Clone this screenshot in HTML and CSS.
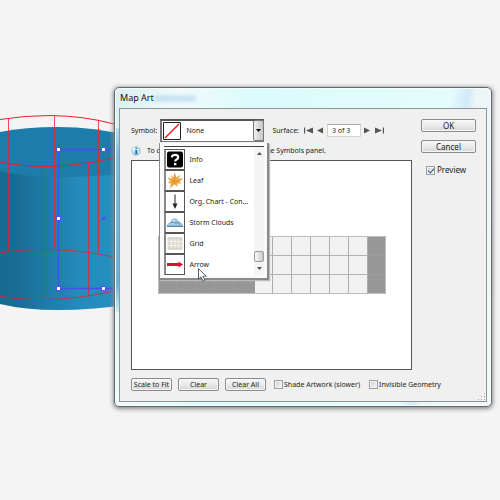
FILE: index.html
```
<!DOCTYPE html>
<html lang="en">
<head>
<meta charset="utf-8">
<title>Map Art</title>
<link rel="stylesheet" href="styles.css">
</head>
<body>
<svg class="artwork" width="130" height="330" viewBox="0 0 130 330" aria-hidden="true">
  <defs>
    <linearGradient id="side" x1="0" x2="1" y1="0" y2="0">
      <stop offset="0" stop-color="#176a90"/>
      <stop offset=".12" stop-color="#196c93"/>
      <stop offset=".62" stop-color="#248cbd"/>
      <stop offset="1" stop-color="#248fc1"/>
    </linearGradient>
  </defs>
  <path d="M0 150H130V304Q95 310 58 310Q25 310 0 304Z" fill="url(#side)"/>
  <path d="M0 132Q25 127 58 127Q95 127 130 136V173Q95 177 58 177Q25 177 0 171Z" fill="#1e7cab"/>
  <g fill="none" stroke="#e8202c">
    <path d="M0 119.500Q25 115.500 50 115.500Q85 116 114 124L130 129"/>
    <path d="M8.500 118V251M54.500 116V249M98.500 120V253" stroke-opacity=".8"/>
    <path d="M0 162Q20 166.500 50 166.500Q90 165 130 154"/>
    <path d="M41.500 166V299M88.500 164V297M0 253Q22 249 50 249.500Q90 250 130 261M0 296Q20 300 50 299.500Q90 298 130 287" stroke-opacity=".8"/>
  </g>
  <path d="M130 149.500H58.500V288.500H130" fill="none" stroke="#4b4cf0" stroke-width="1.300"/>
  <g fill="#fff" stroke="#5548f5">
    <path d="M56.500 147.500h4v4h-4zM101.500 147.500h4v4h-4zM56.500 216.500h4v4h-4zM56.500 286.500h4v4h-4zM101.500 286.500h4v4h-4z"/>
  </g>
  <path d="M102 217h3v3h-3z" fill="#5548f5"/>
</svg>

<main class="dialog" aria-labelledby="title">
  <header class="titlebar">
    <h1 id="title">Map Art</h1>
    <span class="ghost" aria-hidden="true"></span>
  </header>
  <form class="client">
    <div class="columns">
      <section class="editor">
        <div class="toolbar">
          <label for="symbol">Symbol:</label>
          <div class="combo">
            <select id="symbol"><option>None</option></select>
            <svg class="combo-icon" width="18" height="18" viewBox="0 0 18 18" aria-hidden="true">
              <path d="M.5.500h17v17H.5z" fill="#fff" stroke="#222"/>
              <path d="M2 16L16 2" stroke="#f01818" stroke-width="1.500"/>
            </svg>
            <span class="combo-arrow" aria-hidden="true"><svg width="5" height="3" viewBox="0 0 5 3"><path d="M0 0h5L2.500 3z"/></svg></span>
            <div class="popup">
              <ul role="listbox" aria-label="Symbols">
                <li role="option"><svg viewBox="0 0 18 18"><rect x="1" y="1" width="16" height="16" rx="2" fill="#000"/><path d="M5.800 6.800Q6 4.300 9 4.300Q12.200 4.300 12.200 6.700Q12.200 8.200 10.500 9Q9.200 9.600 9.200 11" fill="none" stroke="#fff" stroke-width="2.200"/><path d="M8 12.500h2.400v2.300H8z" fill="#fff"/></svg>Info</li>
                <li role="option"><svg viewBox="0 0 18 18"><path d="M8.500 1L10.500 6L14 3L12.500 7.500L17 6.500L13.500 10L15.500 12L11 12L12 15.500L8.500 13L4 15.500L5 12L1.500 11.500L4.500 9.500L1 5.500L6 7.500L5 3.500L7.500 6Z" fill="#f0a83c"/><path d="M8.700 3L8.500 11L4 17M3 6.800L8.500 11L15 7.500" fill="none" stroke="#d58a2a" stroke-width=".7"/></svg>Leaf</li>
                <li role="option"><svg viewBox="0 0 18 18"><path d="M9 2V12" stroke="#222"/><path d="M6.500 11h5L9 16.500z" fill="#222"/></svg>Org. Chart - Con...</li>
                <li role="option"><svg viewBox="0 0 18 18"><path d="M1 12.500Q2 9.500 5 9Q5 5.500 8 5.500Q11 4.500 12 8Q15 8.500 17 12.500Z" fill="#a9cbe2" stroke="#6c9abc" stroke-width=".7"/><path d="M5 9Q8 7.500 9 9.500Q12 8 14 11M1 13H17" fill="none" stroke="#4f87ae"/><path d="M6 7L9 7.500" stroke="#eef8ff"/></svg>Storm Clouds</li>
                <li role="option"><svg viewBox="0 0 18 18"><path d="M1.500 3h15v12h-15z" fill="#dcdad0"/><path d="M5.500 3v12M9 3v12M12.500 3v12M1 7h16M1 11h16" stroke="#f5f4ee" stroke-width=".8"/><path d="M2 3.500h14M2 14.500h14" stroke="#cbc8bb"/></svg>Grid</li>
                <li role="option"><svg viewBox="0 0 18 18"><path d="M1 7.500H12.500V6L17 9L12.500 12V10.500H1z" fill="#df102e"/></svg>Arrow</li>
              </ul>
              <div class="scrollbar" aria-hidden="true">
                <svg width="5" height="3" viewBox="0 0 5 3"><path d="M0 3h5L2.500 0z"/></svg>
                <span class="thumb"></span>
                <svg width="5" height="3" viewBox="0 0 5 3"><path d="M0 0h5L2.500 3z"/></svg>
              </div>
              <svg class="cursor" width="9" height="14" viewBox="0 0 9 14" aria-hidden="true"><path d="M.5.700V11L3 8.800L5 13.200L6.800 12.400L5 8.200H8.300Z" fill="#fff" stroke="#555f73"/></svg>
            </div>
          </div>
          <label class="surface" for="surface">Surface:</label>
          <button class="nav" type="button" aria-label="First surface"><svg width="9" height="7" viewBox="0 0 9 7"><path d="M0 .5h1.200v6H0zM2 3.500L9 .5v6z"/></svg></button>
          <button class="nav prev" type="button" aria-label="Previous surface"><svg width="6" height="7" viewBox="0 0 6 7"><path d="M0 3.500L6 .5v6z"/></svg></button>
          <input id="surface" class="page" value="3 of 3">
          <button class="nav next" type="button" aria-label="Next surface"><svg width="6" height="7" viewBox="0 0 6 7"><path d="M0 .5v6L6 3.500z"/></svg></button>
          <button class="nav" type="button" aria-label="Last surface"><svg width="9" height="7" viewBox="0 0 9 7"><path d="M9 .5H7.800v6H9zM7 3.500L0 .5v6z"/></svg></button>
        </div>
        <p class="hint">
          <svg width="10" height="10" viewBox="0 0 10 10" aria-hidden="true"><circle cx="5" cy="5" r="4.500" fill="#b9dcec" stroke="#a4c5d6" stroke-width=".6"/><ellipse cx="4" cy="3.500" rx="2.600" ry="2" fill="#e4f5fc"/><path d="M4.500 1.800h1.400v1.300H4.500zM4 4h2v3.400h.8v.8H3.800v-.8h.7V4.800H4z" fill="#176a99"/></svg>
          <span>To create 3D artwork, edit the</span>
          <span class="hint-end">the Symbols panel.</span>
        </p>
        <div class="preview">
          <svg width="228" height="58" viewBox="0 0 228 58" role="img" aria-label="Surface grid">
            <path d="M0 0h228v58H0z" fill="#979797"/>
            <path d="M97 0h112v58H97z" fill="#f2f2f2"/>
            <path d="M97 19.500h113M97 38.500h113" stroke="#b2b2b2"/>
            <path d="M114.500 0v58M133.500 0v58M152.500 0v58M171.500 0v58M190.500 0v58M209.500 0v58" stroke="#adadad"/>
            <path d="M0 19.500h97M0 38.500h97M210 19.500h18M210 38.500h18M18.500 0v58M37.500 0v58M56.500 0v58M75.500 0v58" stroke="#a0a0a0" stroke-opacity=".6"/>
            <path d="M.5.500h227v57H.5z" fill="none" stroke="#bdbdbd"/>
          </svg>
        </div>
      </section>
      <aside class="actions">
        <button class="btn" type="submit">OK</button>
        <button class="btn" type="button">Cancel</button>
        <label class="check"><input type="checkbox" checked>Preview</label>
      </aside>
    </div>
    <footer class="options">
      <button class="btn small" type="button">Scale to Fit</button>
      <button class="btn small" type="button">Clear</button>
      <button class="btn small" type="button">Clear All</button>
      <label class="check small">
        <input type="checkbox">Shade Artwork (slower)</label>
      <label class="check small">
        <input type="checkbox">Invisible Geometry</label>
    </footer>
    <svg class="grip" width="7" height="7" viewBox="0 0 7 7" aria-hidden="true"><path d="M6 0h1v1H6zM3 3h1v1H3zM6 3h1v1H6zM0 6h1v1H0zM3 6h1v1H3zM6 6h1v1H6z" fill="#aaa"/></svg>
  </form>
</main>
</body>
</html>
```
FILE: styles.css
```
* {
  box-sizing: border-box;
}

body {
  margin: 0;
  min-height: 100vh;
  overflow: hidden;
  background: #f4f4f4;
  color: #222;
  font: 7px/10px "Noto Sans", "Open Sans", sans-serif;
}

svg {
  display: block;
  flex: none;
}

button,
input,
select {
  margin: 0;
  font: inherit;
  color: inherit;
}

.artwork {
  position: absolute;
  left: 0;
  top: 0;
}

/* Window frame */
.dialog {
  position: absolute;
  left: 114px;
  right: 8px;
  top: 87px;
  padding: 0 4px 4px;
  border: 1px solid #60686b;
  border-radius: 5px;
  background:
    linear-gradient(#b5e0ee, #7cc0e4 15%, #68b4df 85%, #c8f0f5) 1px 40px / 3px 184px no-repeat,
    linear-gradient(100deg, #d9eff3, #f1fbfb 15%, #dcfbfc 32%, #e4fcfc 78%, #d2eafa 82%, #edf5f7 84%, #f5f8f8);
  box-shadow: inset 0 0 0 1px #f4fdfd, 0 1px 4px 1px #8a8a8a;
}

.titlebar {
  display: flex;
  align-items: center;
  height: 20px;
}

.titlebar h1 {
  margin: 0 0 0 1px;
  font-size: 9px;
  font-weight: 400;
  color: #111;
}

.ghost {
  width: 42px;
  height: 5px;
  background: #a5cae9;
  opacity: .65;
  filter: blur(2px);
}

.client {
  position: relative;
  padding: 10px 10px 10px 11px;
  border: 1px solid #8d9494;
  background: #f0f0f0;
}

.columns {
  display: flex;
  gap: 9px;
}

.editor {
  flex: 1;
  min-width: 0;
}

.toolbar {
  display: flex;
  align-items: center;
  height: 23px;
}

/* Symbol picker */
.combo {
  position: relative;
  width: 104px;
  height: 23px;
  margin-left: auto;
}

.combo select {
  appearance: none;
  width: 100%;
  height: 100%;
  padding: 0 14px 0 24px;
  border: 1px solid #777;
  border-top: 2px solid #555;
  border-left: 2px solid #777;
  border-radius: 0;
  background: #fff;
}

.combo-icon {
  position: absolute;
  left: 3px;
  top: 3px;
}

.combo-arrow {
  position: absolute;
  right: 0;
  top: 1px;
  bottom: 1px;
  display: grid;
  place-items: center;
  width: 11px;
  border: 1px solid #777;
  border-radius: 2px;
  background: linear-gradient(90deg, #eee, #c6c6c6);
}

.popup {
  position: absolute;
  z-index: 2;
  left: -1px;
  top: 24px;
  display: flex;
  width: 110px;
  padding: 3px 3px 3px 4px;
  border: solid #8a8a8a;
  border-width: 0 2px 2px 1px;
  background: #fafafa;
  box-shadow: 1px 1px 1px #bbb;
}

.popup ul {
  flex: 1;
  min-width: 0;
  margin: 0;
  padding: 2px 0 0;
  border-top: 1px solid #444;
  background: #fff;
  list-style: none;
}

.popup li {
  display: flex;
  align-items: center;
  gap: 4px;
  height: 21px;
  white-space: nowrap;
}

.popup li svg {
  width: 21px;
  height: 21px;
  border: 1px solid #555;
  border-left: 2px solid #888;
}

.scrollbar {
  display: flex;
  flex-direction: column;
  align-items: center;
  width: 10px;
  padding: 5px 0 5px;
  border-top: 1px solid #444;
  background: #f4f4f4;
}

.scrollbar path,
.nav path {
  fill: #555;
}

.thumb {
  width: 10px;
  height: 11px;
  margin: auto 0 5px;
  border: 1px solid #999;
  border-radius: 2px;
  background: linear-gradient(90deg, #fafafa, #c8c8c8);
}

.cursor {
  position: absolute;
  left: 38px;
  bottom: -4px;
}

/* Surface navigator */
.surface {
  margin: 0 5px 0 8px;
}

.nav {
  padding: 0;
  border: 0;
  background: none;
}

.prev {
  margin: 0 4px;
}

.page {
  width: 34px;
  height: 13px;
  padding: 0 4px;
  border: 1px solid #d4d4d4;
  border-top-color: #aaa;
  background: #fff;
}

.next {
  margin: 0 5px 0 3px;
}

.toolbar .nav:last-child {
  margin-right: 28px;
}

.hint {
  display: flex;
  align-items: center;
  height: 18px;
  margin: 0;
  white-space: nowrap;
}

.hint span {
  width: 40px;
  margin-left: 6px;
}

.hint .hint-end {
  width: auto;
  margin: 0 86px 0 auto;
}

.preview {
  padding: 75px 26px;
  border: 1px solid #555;
  background: #fff;
}

/* Controls */
.actions {
  display: flex;
  flex-direction: column;
  gap: 8px;
  width: 55px;
  font-size: 8px;
}

.btn {
  height: 13px;
  padding: 0;
  border: 1px solid #8a8a8a;
  border-radius: 2px;
  background: linear-gradient(#f6f6f6, #ececec 45%, #d5d5d5);
  box-shadow: inset 0 0 0 1px #f8f8f8;
  line-height: 11px;
  white-space: nowrap;
}

.btn.small {
  width: 41px;
}

.check {
  display: flex;
  align-items: center;
  gap: 2px;
  white-space: nowrap;
}

.check.small {
  gap: 1px;
}

.actions .check {
  margin: 4px 0 0 5px;
}

.check input {
  appearance: none;
  flex: none;
  width: 9px;
  height: 9px;
  border: 1px solid #9a9fa3;
  background: linear-gradient(135deg, #ccd0d3, #f8f8f8);
  box-shadow: inset 0 0 0 1px #f4f4f4;
}

.check input:checked::after {
  content: "";
  display: block;
  width: 3px;
  height: 5px;
  margin: 0 2px;
  border: solid #33499b;
  border-width: 0 1px 1px 0;
  transform: rotate(40deg);
}

.options {
  display: flex;
  gap: 6px;
  margin-top: 8px;
}

.options .check:nth-child(4) {
  margin: 0 3px 0 2px;
}

.grip {
  position: absolute;
  right: 1px;
  bottom: 1px;
}
```
